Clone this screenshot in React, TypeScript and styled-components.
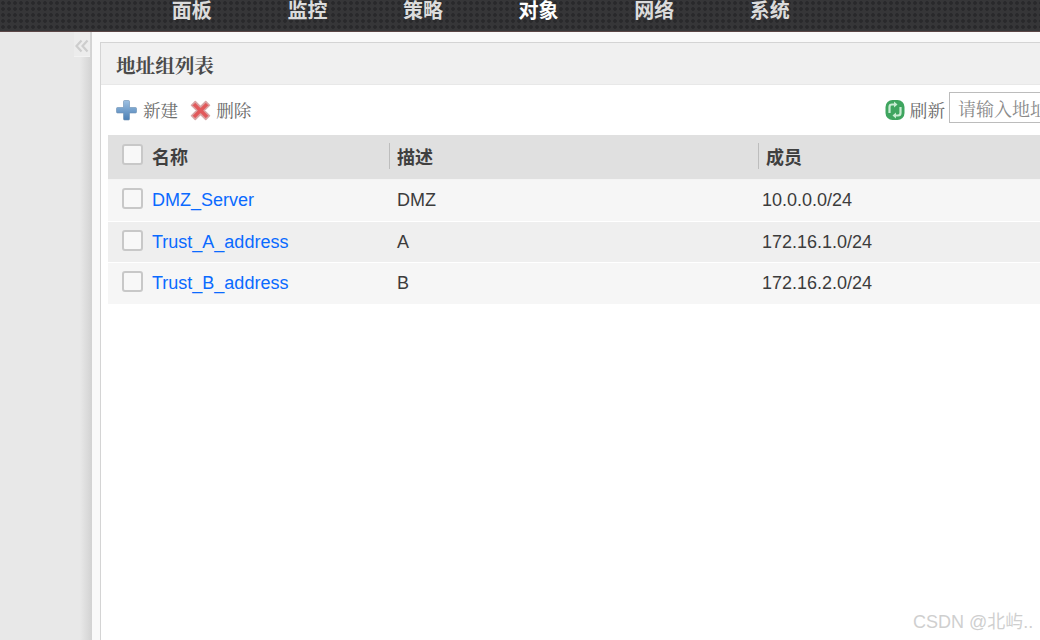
import React, { FunctionComponent } from "react";
import styled, { createGlobalStyle } from "styled-components";

const navItems = ["面板", "监控", "策略", "对象", "网络", "系统"];
const activeNav = "对象";

const rows = [
  { name: "DMZ_Server", desc: "DMZ", members: "10.0.0.0/24" },
  { name: "Trust_A_address", desc: "A", members: "172.16.1.0/24" },
  { name: "Trust_B_address", desc: "B", members: "172.16.2.0/24" },
];

const PlusIcon = () => (
  <svg width="22" height="22" viewBox="0 0 22 22">
    <defs>
      <linearGradient id="plusFill" x1="0" y1="0" x2="0" y2="1">
        <stop offset="0" stopColor="#9dc0e2" />
        <stop offset="1" stopColor="#4a7fb5" />
      </linearGradient>
    </defs>
    <path
      d="M8.5 1.500h4a1 1 0 0 1 1 1v6h6a1 1 0 0 1 1 1v3.500a1 1 0 0 1-1 1h-6v6a1 1 0 0 1-1 1h-4a1 1 0 0 1-1-1v-6h-6a1 1 0 0 1-1-1V9.500a1 1 0 0 1 1-1h6v-6a1 1 0 0 1 1-1z"
      fill="url(#plusFill)"
      stroke="#6b8fb2"
      strokeWidth="0.6"
    />
  </svg>
);

const CrossIcon = () => (
  <svg width="21" height="21" viewBox="0 0 20 20">
    <path
      d="M5 1.500 10 6.500l5-5 3.500 3.500-5 5 5 5-3.500 3.500-5-5-5 5L1.500 15l5-5-5-5z"
      fill="#e2595b"
      stroke="#d8a5a5"
      strokeWidth="1.600"
      strokeLinejoin="round"
    />
  </svg>
);

const RefreshIcon = () => (
  <svg width="20" height="22" viewBox="0 0 20 22">
    <rect x="0.500" y="1" width="19" height="20" rx="7" fill="#3fa55f" />
    <path d="M4.500 14V8Q4.500 5.500 7 5.500h4" fill="none" stroke="#c8ecd2" strokeWidth="2.200" />
    <path d="M9 2.500 12.500 5.500 9 8.500z" fill="#c8ecd2" />
    <path d="M15.500 8v6q0 2.500-2.500 2.500H9" fill="none" stroke="#c8ecd2" strokeWidth="2.200" />
    <path d="M11 13.500 7.500 16.500 11 19.500z" fill="#c8ecd2" />
  </svg>
);

const CollapseIcon = () => (
  <svg width="14" height="14" viewBox="0 0 14 14">
    <path
      d="M6.500 1.500 1.500 7l5 5.500M12.500 1.500 7.500 7l5 5.500"
      fill="none"
      stroke="#cdcdcd"
      strokeWidth="2.200"
    />
  </svg>
);

const App: FunctionComponent = () => {
  return (
    <Page>
      <GlobalStyle />
      <Header>
        <Nav>
          {navItems.map((item) => (
            <NavItem key={item} $active={item === activeNav}>
              {item}
            </NavItem>
          ))}
        </Nav>
      </Header>
      <Body>
        <Sidebar>
          <Collapse>
            <CollapseIcon />
          </Collapse>
        </Sidebar>
        <Main>
          <Panel>
            <PanelTitle>地址组列表</PanelTitle>
            <Toolbar>
              <ToolButton>
                <PlusIcon />
                新建
              </ToolButton>
              <ToolButton>
                <CrossIcon />
                删除
              </ToolButton>
              <ToolRight>
                <ToolButton>
                  <RefreshIcon />
                  刷新
                </ToolButton>
                <Search placeholder="请输入地址组名称" />
              </ToolRight>
            </Toolbar>
            <Table>
              <HeadRow>
                <Cell>
                  <Check $head />
                  名称
                </Cell>
                <Cell $divided>描述</Cell>
                <Cell $divided>成员</Cell>
              </HeadRow>
              {rows.map((row, i) => (
                <Row key={row.name} $odd={i % 2 === 1}>
                  <Cell>
                    <Check />
                    <NameLink>{row.name}</NameLink>
                  </Cell>
                  <Cell>{row.desc}</Cell>
                  <MemberCell>{row.members}</MemberCell>
                </Row>
              ))}
            </Table>
          </Panel>
        </Main>
      </Body>
      <Watermark>CSDN @北屿..</Watermark>
    </Page>
  );
};

export default App;

const GlobalStyle = createGlobalStyle`
  html, body {
    margin: 0;
    padding: 0;
    overflow: hidden;
  }
  body {
    font-family: "Liberation Sans", "Noto Sans CJK SC", sans-serif;
  }
`;

const Page = styled.div`
  position: relative;
  width: 1040px;
  height: 640px;
  overflow: hidden;
  display: flex;
  flex-direction: column;
  background: #fff;
`;

const Header = styled.header`
  height: 32px;
  flex: none;
  box-sizing: border-box;
  padding-left: 134px;
  overflow: hidden;
  background-color: #363638;
  background-image: radial-gradient(circle at 3px 3px, #29292b 1.500px, transparent 2.200px);
  background-size: 6px 6px;
  border-bottom: 1px solid #5a4646;
`;

const Nav = styled.nav`
  display: flex;
  margin-top: -8px;
`;

const NavItem = styled.span<{ $active?: boolean }>`
  width: 115.6px;
  text-align: center;
  font: bold 20px/36px "Noto Sans CJK SC", sans-serif;
  color: ${(p) => (p.$active ? "#fff" : "#dcdcdc")};
`;

const Body = styled.div`
  flex: 1;
  display: flex;
  min-height: 0;
`;

const Sidebar = styled.aside`
  position: relative;
  width: 92px;
  flex: none;
  background: linear-gradient(to right, #e8e8e8 0, #e8e8e8 80px, #d2d2d2 92px);
`;

const Collapse = styled.div`
  position: absolute;
  top: 0;
  left: 74px;
  width: 16px;
  height: 25px;
  display: flex;
  align-items: center;
  justify-content: center;
  padding-top: 3px;
  box-sizing: border-box;
  background: #ececec;
  border-bottom: 1px solid #f2f2f2;
`;

const Main = styled.main`
  flex: 1;
  min-width: 0;
  padding: 10px 0 0 8px;
  background: #f9f9f9;
`;

const Panel = styled.section`
  width: 1021px;
  height: 640px;
  box-sizing: border-box;
  background: #fff;
  border: 1px solid #d4d4d4;
`;

const PanelTitle = styled.h2`
  margin: 0;
  height: 42px;
  box-sizing: border-box;
  padding-left: 15px;
  background: #f0f0f0;
  border-bottom: 1px solid #e8e8e8;
  font: bold 19.6px/44px "Noto Serif CJK SC", "Noto Sans CJK SC", serif;
  color: #4a4a4a;
`;

const Toolbar = styled.div`
  height: 50px;
  display: flex;
  align-items: center;
  padding: 0 11px 0 15px;
  gap: 12px;
`;

const ToolButton = styled.span`
  display: inline-flex;
  align-items: center;
  flex: none;
  gap: 5px;
  white-space: nowrap;
  font: 17.6px/24px "Noto Serif CJK SC", "Noto Sans CJK SC", serif;
  color: #6a6a6a;
`;

const ToolRight = styled.div`
  margin-left: auto;
  display: flex;
  align-items: center;
  gap: 4px;
`;

const Search = styled.input`
  width: 160px;
  height: 31px;
  margin-top: -5px;
  box-sizing: border-box;
  padding: 0 8px;
  border: 1px solid #bcbcbc;
  font: 18px "Noto Serif CJK SC", "Noto Sans CJK SC", serif;
  background: #fff;
  outline: none;
  &::placeholder {
    color: #8a8a8a;
  }
`;

const Table = styled.div`
  margin-left: 7px;
  display: flex;
  flex-direction: column;
`;

const columns = "281px 369px 1fr";

const HeadRow = styled.div`
  height: 45px;
  box-sizing: border-box;
  padding-bottom: 2px;
  display: grid;
  grid-template-columns: ${columns};
  align-items: center;
  background: #e0e0e0;
  border-bottom: 1px solid #f4f4f4;
  font: bold 18px "Noto Sans CJK SC", sans-serif;
  color: #3f3f3f;
`;

const Row = styled.div<{ $odd?: boolean }>`
  height: 41px;
  box-sizing: border-box;
  display: grid;
  grid-template-columns: ${columns};
  align-items: center;
  background: ${(p) => (p.$odd ? "#efefef" : "#f6f6f6")};
  border-bottom: 1px solid #fff;
  font-size: 18px;
  color: #3c3c3c;
  &:nth-child(2),
  &:nth-child(4) {
    height: 42px;
  }
`;

const Cell = styled.div<{ $divided?: boolean }>`
  display: flex;
  align-items: center;
  height: 26px;
  box-sizing: border-box;
  padding-left: ${(p) => (p.$divided ? "7px" : "8px")};
  border-left: ${(p) => (p.$divided ? "1px solid #bdbdbd" : "none")};
  &:first-child {
    padding-left: 14px;
  }
`;

const MemberCell = styled(Cell)`
  padding-left: 4px;
`;

const Check = styled.span<{ $head?: boolean }>`
  width: 21px;
  height: 21px;
  flex: none;
  box-sizing: border-box;
  margin-right: 9px;
  margin-top: ${(p) => (p.$head ? "-3px" : "-4px")};
  border: 2px solid #c8c8c8;
  border-radius: 3px;
  background: #f8f8f8;
`;

const NameLink = styled.a`
  color: #0a6aff;
  cursor: pointer;
`;

const Watermark = styled.div`
  position: absolute;
  left: 913px;
  top: 610px;
  font: 18px/24px "Liberation Sans", "Noto Sans CJK SC", sans-serif;
  color: #cfcfcf;
  white-space: nowrap;
`;
